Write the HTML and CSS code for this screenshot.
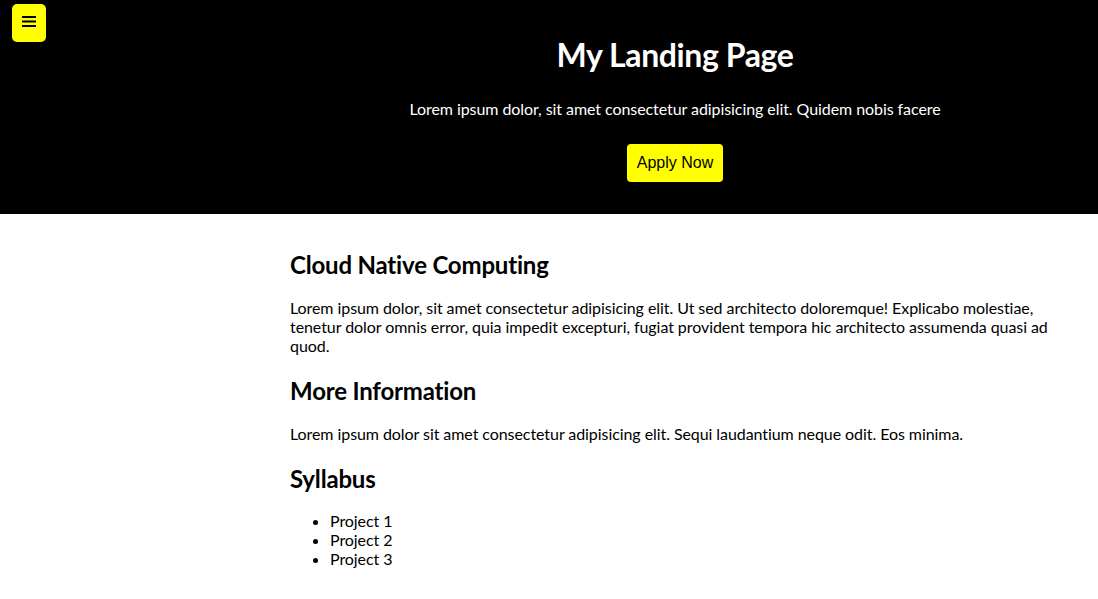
FILE: index.html
```html
<!DOCTYPE html>
<html lang="en">
<head>
<meta charset="utf-8">
<title>My Landing Page</title>
<link rel="stylesheet" href="styles.css">
</head>
<body>
<button class="menu-btn" aria-label="Menu">
  <svg width="14" height="12" viewBox="0 0 14 12"><rect x="0" y="1" width="14" height="2"/><rect x="0" y="5.5" width="14" height="2"/><rect x="0" y="10" width="14" height="2"/></svg>
</button>
<header class="hero">
  <div class="hero-inner">
    <h1 class="hero-title">My Landing Page</h1>
    <p class="hero-text">Lorem ipsum dolor, sit amet consectetur adipisicing elit. Quidem nobis facere</p>
    <button class="apply-btn">Apply Now</button>
  </div>
</header>
<main class="content">
  <h2 class="section-title">Cloud Native Computing</h2>
  <p class="section-text">Lorem ipsum dolor, sit amet consectetur adipisicing elit. Ut sed architecto doloremque! Explicabo molestiae, tenetur dolor omnis error, quia impedit excepturi, fugiat provident tempora hic architecto assumenda quasi ad quod.</p>
  <h2 class="section-title">More Information</h2>
  <p class="section-text">Lorem ipsum dolor sit amet consectetur adipisicing elit. Sequi laudantium neque odit. Eos minima.</p>
  <h2 class="section-title">Syllabus</h2>
  <ul class="syllabus">
    <li>Project 1</li>
    <li>Project 2</li>
    <li>Project 3</li>
  </ul>
</main>
</body>
</html>
```
FILE: styles.css
```css
html, body {
  margin: 0;
  padding: 0;
}
body {
  font-family: Lato, "Open Sans", sans-serif;
  font-size: 16px;
  color: #000;
  background: #fff;
  letter-spacing: -0.07px;
  font-variant-ligatures: none;
}
.menu-btn {
  position: absolute;
  top: 4px;
  left: 12px;
  width: 34px;
  height: 38px;
  padding: 0;
  border: none;
  border-radius: 5px;
  background: #ffff00;
  display: flex;
  align-items: center;
  justify-content: center;
  cursor: pointer;
}
.menu-btn svg {
  fill: #000;
  margin-top: -4px;
}
.hero {
  background: #000;
  color: #fff;
  padding: 36px 0 32px 252px;
}
.hero-inner {
  display: flex;
  flex-direction: column;
  align-items: center;
}
.hero-title {
  margin: 0;
  font-size: 32px;
  line-height: 38px;
  font-weight: 700;
  letter-spacing: -0.4px;
}
.hero-text {
  margin: 25px 0 0;
  line-height: 19px;
}
.apply-btn {
  margin-top: 26px;
  background: #ffff00;
  color: #000;
  border: none;
  border-radius: 4px;
  font-family: "Liberation Sans", Arial, sans-serif;
  font-size: 16px;
  line-height: 18px;
  letter-spacing: 0;
  padding: 10px 10px;
  cursor: pointer;
}
.content {
  padding: 16px 40px 20px 290px;
}
.section-title {
  font-size: 24px;
  font-weight: 700;
  line-height: 29px;
  letter-spacing: -0.18px;
  margin: 20px 0 19px;
}
.section-text {
  margin: 0 0 21px;
  line-height: 19px;
}
.syllabus {
  margin: -1px 0 0;
  padding-left: 40px;
  line-height: 19px;
}
```
